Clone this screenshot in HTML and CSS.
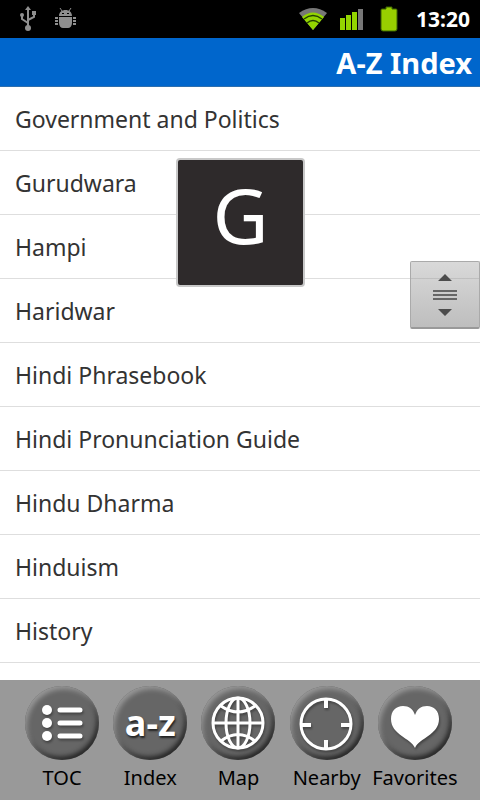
FILE: index.html
```
<!DOCTYPE html>
<html lang="en">
<head>
<meta charset="utf-8">
<meta name="viewport" content="width=device-width">
<title>A-Z Index</title>
<link rel="stylesheet" href="styles.css">
</head>
<body>
<div class="status">
  <svg class="status-left" width="60" height="38" viewBox="0 0 60 38" aria-hidden="true">
    <g fill="none" stroke="#8f8f8f" stroke-width="2">
      <path d="M10 27V9M10 23L4 19V15M10 20L16 17V13"/>
    </g>
    <g fill="#8f8f8f">
      <path d="M10 6l3 4H7z"/><circle cx="10" cy="28" r="3"/><circle cx="4" cy="15" r="2"/><path d="M14 11h4v4h-4z"/>
      <path d="M41 16c0-4 3-6 6.500-6s6.500 2 6.500 6zM41 17h13v6c0 3-2 5-4 5h-5c-2 0-4-2-4-5z"/>
      <path d="M37 17h3v2h-3zM37 20h3v2h-3zM37 23h3v2h-3zM55 17h3v2h-3zM55 20h3v2h-3zM55 23h3v2h-3z"/>
    </g>
    <path d="M44 11l-2-3M51 11l2-3" stroke="#8f8f8f"/>
    <path d="M44 13h2v1h-2zM49 13h2v1h-2z" fill="#000"/>
  </svg>
  <svg class="status-right" width="102" height="38" viewBox="0 0 102 38" aria-hidden="true">
    <path d="M15 30L1 13Q15 3 29 13z" fill="#777"/>
    <path d="M15 30L4 17Q15 8 26 17z" fill="#93d500"/>
    <path d="M6 19Q15 12 24 19M9 23Q15 18 21 23" fill="none" stroke="#234000" stroke-width="1.500"/>
    <g fill="#93d500"><path d="M42 18h5v12h-5zM48 15h5v15h-5zM54 12h5v18h-5z"/></g>
    <path d="M60 9h5v21h-5z" fill="#777"/>
    <path d="M88 7h6v2h4q1 0 1 1v19q0 2-2 2H85q-2 0-2-2V10q0-1 1-1h4z" fill="#98cf00" stroke="#3d6500"/>
  </svg>
  <time class="clock">13:20</time>
</div>
<header class="title"><h1>A-Z Index</h1></header>
<main class="content">
  <ul class="list">
    <li><a href="#">Government and Politics</a></li>
    <li><a href="#">Gurudwara</a></li>
    <li><a href="#">Hampi</a></li>
    <li><a href="#">Haridwar</a></li>
    <li><a href="#">Hindi Phrasebook</a></li>
    <li><a href="#">Hindi Pronunciation Guide</a></li>
    <li><a href="#">Hindu Dharma</a></li>
    <li><a href="#">Hinduism</a></li>
    <li><a href="#">History</a></li>
  </ul>
  <div class="letter">G</div>
  <button class="thumb" type="button" aria-label="Fast scroll">
    <svg width="24" height="44" viewBox="0 0 24 44" aria-hidden="true">
      <path d="M5 8l7-7 7 7zM5 36h14l-7 7z" fill="#4c4c4c"/>
      <path d="M0 18h24M0 22h24M0 26h24" stroke="#666" stroke-width="2"/>
    </svg>
  </button>
</main>
<nav class="tabs">
  <a href="#"><span class="disc"><svg viewBox="0 0 74 74" aria-hidden="true">
    <g fill="#fff"><circle cx="22" cy="24" r="5"/><circle cx="22" cy="37" r="5"/><circle cx="22" cy="50" r="5"/></g>
    <path d="M35 24h20M35 37h20M35 50h20" stroke="#fff" stroke-width="5" stroke-linecap="round"/>
  </svg></span>TOC</a>
  <a href="#"><span class="disc"><span class="az">a-z</span></span>Index</a>
  <a href="#"><span class="disc"><svg viewBox="0 0 74 74" aria-hidden="true">
    <g fill="none" stroke="#fff" stroke-width="3">
      <circle cx="37" cy="37" r="25"/><ellipse cx="37" cy="37" rx="12" ry="25"/>
      <path d="M37 12v50M12 37h50M20 20Q37 32 54 20M20 55Q37 42 54 55"/>
    </g>
  </svg></span>Map</a>
  <a href="#"><span class="disc"><svg viewBox="0 0 74 74" aria-hidden="true">
    <circle cx="36" cy="38" r="25" fill="none" stroke="#fff" stroke-width="3"/>
    <path d="M36 13v9M36 54v9M11 39h10M51 39h10" stroke="#fff" stroke-width="4"/>
  </svg></span>Nearby</a>
  <a href="#"><span class="disc"><svg viewBox="0 0 74 74" aria-hidden="true">
    <path d="M37 62C33 52 13 49 13 33C13 25 18 20 25 20C31 20 35 23 37 29C39 23 43 20 49 20C56 20 61 25 61 33C61 49 41 52 37 62z" fill="#fff"/>
  </svg></span>Favorites</a>
</nav>
</body>
</html>
```
FILE: styles.css
```
* { box-sizing: border-box; }
body {
  margin: 0;
  min-height: 100vh;
  display: flex;
  flex-direction: column;
  background: #fff;
  font-family: "Noto Sans", "Open Sans", sans-serif;
}
a { color: inherit; text-decoration: none; }
svg { display: block; }
.status {
  height: 38px;
  padding: 0 10px 0 18px;
  display: flex;
  align-items: center;
  background: #000;
  color: #fff;
}
.status-left { margin-right: auto; }
.status-right { margin-right: 16px; }
.clock { font-size: 21px; font-weight: 700; line-height: 38px; }
.title {
  height: 49px;
  padding: 0 8px;
  background: #0066cc;
  border-bottom: 1px solid #2d6fae;
  color: #fff;
  text-align: right;
}
h1 { margin: 0; font-size: 29px; font-weight: 700; line-height: 50px; }
.content { position: relative; flex: 1; }
.list { margin: 0; padding: 0; list-style: none; }
.list a {
  display: block;
  height: 64px;
  padding: 0 15px;
  border-bottom: 1px solid #dedede;
  color: #333;
  font-size: 23px;
  line-height: 64px;
}
.letter {
  position: absolute;
  top: 71px;
  left: 50%;
  width: 129px;
  height: 129px;
  margin-left: -64px;
  border: 2px solid #c8c8c8;
  border-radius: 4px;
  background: #2e2a2b;
  color: #fff;
  font-size: 77px;
  line-height: 110px;
  text-align: center;
}
.thumb {
  position: absolute;
  top: 174px;
  right: 0;
  width: 70px;
  height: 68px;
  padding: 0;
  display: grid;
  place-items: center;
  border: 1px solid #aaa;
  border-bottom: 2px solid #999;
  border-radius: 2px;
  background: linear-gradient(rgba(160, 160, 160, 0.4), rgba(125, 125, 125, 0.5));
}
.tabs {
  height: 120px;
  padding: 6px 21px 0 18px;
  display: grid;
  grid-template-columns: repeat(5, minmax(0, 1fr));
  background: #999;
  color: #000;
  font-size: 20px;
  line-height: 36px;
}
.tabs a { display: flex; flex-direction: column; align-items: center; white-space: nowrap; }
.disc {
  width: 74px;
  height: 74px;
  display: grid;
  place-items: center;
  border-radius: 50%;
  background: #666;
  box-shadow: inset 2px 3px 5px #999, inset -2px -3px 5px #222;
}
.disc svg { width: 74px; height: 74px; filter: drop-shadow(1px 2px 1px #444); }
.az {
  color: #fff;
  font-size: 36px;
  font-weight: 700;
  line-height: 70px;
  text-shadow: 1px 2px 2px #222;
}
```
